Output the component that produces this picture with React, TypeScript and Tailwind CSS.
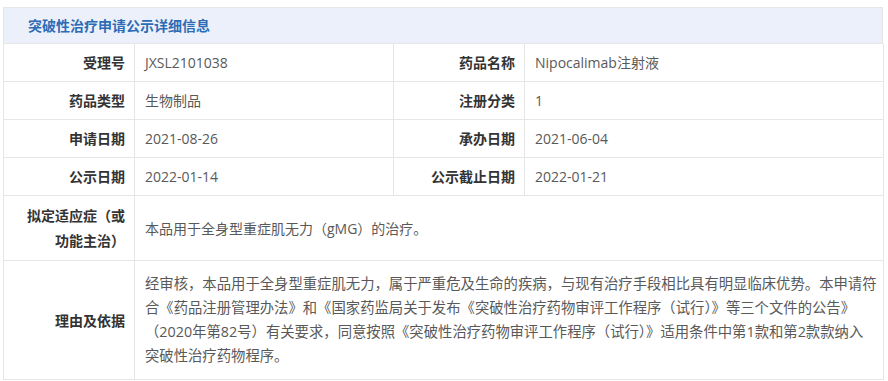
const font = { fontFamily: '"Open Sans", "Noto Sans CJK SC", sans-serif' };

type Pair = { label: string; value: string };

const rows: [Pair, Pair][] = [
  [
    { label: '受理号', value: 'JXSL2101038' },
    { label: '药品名称', value: 'Nipocalimab注射液' },
  ],
  [
    { label: '药品类型', value: '生物制品' },
    { label: '注册分类', value: '1' },
  ],
  [
    { label: '申请日期', value: '2021-08-26' },
    { label: '承办日期', value: '2021-06-04' },
  ],
  [
    { label: '公示日期', value: '2022-01-14' },
    { label: '公示截止日期', value: '2022-01-21' },
  ],
];

const reason = [
  '经审核，本品用于全身型重症肌无力，属于严重危及生命的疾病，与现有治疗手段相比具有明显临床优势。本申请符',
  '合《药品注册管理办法》和《国家药监局关于发布《突破性治疗药物审评工作程序（试行）》等三个文件的公告》',
  '（2020年第82号）有关要求，同意按照《突破性治疗药物审评工作程序（试行）》适用条件中第1款和第2款款纳入',
  '突破性治疗药物程序。',
];

function Label({ children, className = '' }: { children: React.ReactNode; className?: string }) {
  return (
    <div
      className={`flex items-center justify-end border-r border-b border-[#e6e6e6] pr-[9px] text-right text-[14px] font-bold text-[#333] ${className}`}
    >
      {children}
    </div>
  );
}

function Value({ children, className = '' }: { children: React.ReactNode; className?: string }) {
  return (
    <div
      className={`flex items-center border-r border-b border-[#e6e6e6] pl-[10px] text-[14px] text-[#595959] ${className}`}
    >
      {children}
    </div>
  );
}

export default function App() {
  return (
    <div className="min-h-[381px] bg-white pt-[7px] pl-[3px]" style={font}>
      <div className="w-[880px] border-l border-[#e6e6e6]">
        {/* title bar */}
        <div className="flex h-[37px] items-center border-t border-r border-b border-[#e6e6e6] bg-[#ecf0fb] pl-[24px] text-[14px] font-bold text-[#2d6cb5]">
          突破性治疗申请公示详细信息
        </div>

        <div className="grid grid-cols-[131px_259px_131px_359px]">
          {rows.map(([a, b]) => (
            <div key={a.label} className="contents">
              <Label className="h-[38px]">{a.label}</Label>
              <Value className="h-[38px]">{a.value}</Value>
              <Label className="h-[38px]">{b.label}</Label>
              <Value className="h-[38px]">{b.value}</Value>
            </div>
          ))}

          <Label className="h-[65px] leading-[25px]">
            <span>
              拟定适应症（或
              <br />
              功能主治）
            </span>
          </Label>
          <Value className="col-span-3 h-[65px]">本品用于全身型重症肌无力（gMG）的治疗。</Value>

          <Label className="h-[119px]">理由及依据</Label>
          <div className="col-span-3 flex h-[119px] flex-col justify-center overflow-hidden border-r border-b border-[#e6e6e6] pl-[10px] text-[14.35px] leading-[24px] text-[#595959]">
            {reason.map((line) => (
              <span key={line} className="block whitespace-nowrap">
                {line}
              </span>
            ))}
          </div>
        </div>
      </div>
    </div>
  );
}
